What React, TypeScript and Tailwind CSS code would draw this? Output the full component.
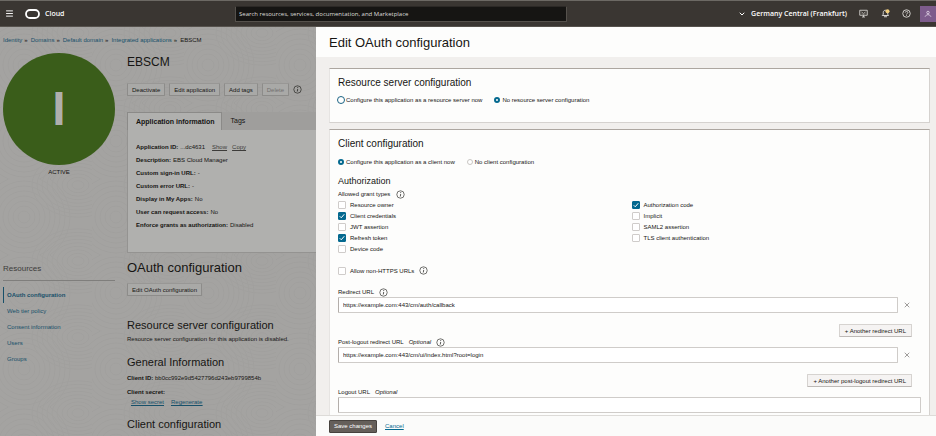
import type { ReactNode } from "react";
import { ChevronDown, Menu, X } from "lucide-react";

function InfoIcon() {
  return (
    <svg className="size-[9px] shrink-0" viewBox="0 0 18 18" fill="none" stroke="currentColor" aria-hidden="true">
      <circle cx="9" cy="9" r="7.4" strokeWidth="1.2" />
      <path d="M9.400 8 8.600 13" strokeWidth="1.4" />
      <circle cx="9.600" cy="5.300" r="0.6" fill="currentColor" strokeWidth="0.6" />
    </svg>
  );
}

function Waves() {
  const rings = [6, 11, 16, 21, 26, 31, 36, 41, 46];
  return (
    <svg className="pointer-events-none absolute inset-0 size-full" aria-hidden="true">
      <defs>
        <pattern id="waves" width="92" height="76" patternUnits="userSpaceOnUse">
          <g fill="none" stroke="#9e9d9b" strokeWidth="1">
            {rings.map((r) => (
              <g key={r}>
                <circle cx="24" cy="38" r={r} />
                <ellipse cx="78" cy="6" rx={r} ry={r * 0.7} />
                <ellipse cx="78" cy="82" rx={r} ry={r * 0.7} />
              </g>
            ))}
          </g>
        </pattern>
      </defs>
      <rect width="100%" height="100%" fill="url(#waves)" opacity="0.6" />
    </svg>
  );
}

function TopBar() {
  return (
    <header className="flex h-[27px] shrink-0 items-center border-t border-b border-t-[#6c6964] border-b-[#56524d] bg-[#3a3632] pl-[5px] font-['Open_Sans','Noto_Sans',sans-serif] text-white">
      <div className="flex w-[230px] items-center">
        <button type="button" aria-label="Open navigation menu">
          <Menu className="size-[9px]" strokeWidth={2.5} />
        </button>
        <svg className="ml-[11px] h-[10px] w-[15px]" viewBox="0 0 15 10" fill="none" aria-label="Oracle">
          <rect x="1" y="1" width="13" height="8" rx="4" stroke="#fff" strokeWidth="1.8" />
        </svg>
        <span className="ml-[5px] text-[7px] leading-[10px] font-semibold">Cloud</span>
      </div>
      <input
        type="search"
        aria-label="Search"
        placeholder="Search resources, services, documentation, and Marketplace"
        className="h-4 w-[332px] rounded-[1px] border border-t-[#2c2926] border-[#55514c] bg-[#161513] px-[3px] text-[6px] placeholder:text-[#deddda]"
      />
      <div className="flex flex-1 items-center justify-end">
        <button type="button" className="flex items-center gap-[5px] text-[7px] leading-[10px] font-semibold">
          <ChevronDown className="size-2" strokeWidth={3} />
          Germany Central (Frankfurt)
        </button>
        <button type="button" aria-label="Developer tools" className="ml-3">
          <svg className="size-[9px]" viewBox="0 0 18 18" fill="none" stroke="#e6e4e1" strokeWidth="1.6">
            <path d="M1.5 2.5h15v10h-15zM6 16h6M9 12.5V16M5 5.5l1.5 1.5L5 8.5M13 5.5 11.500 7l1.500 1.500M7 9.800h4" />
          </svg>
        </button>
        <button type="button" aria-label="Announcements" className="ml-[13px]">
          <svg className="size-[9px]" viewBox="0 0 18 18" fill="none" stroke="#e6e4e1" strokeWidth="1.8">
            <path d="M2.500 13h12.500l-1.500-2.500V7c0-3-2-4.500-4.500-4.500S4.500 4 4.500 7v3.500zM6 15.500h6" />
            <circle cx="13" cy="4.500" r="4" fill="#f3cf7c" stroke="none" />
          </svg>
        </button>
        <button type="button" aria-label="Help" className="ml-3">
          <svg className="size-[9px]" viewBox="0 0 18 18" fill="none" stroke="#e6e4e1" strokeWidth="1.7">
            <circle cx="9" cy="9" r="7.500" />
            <path d="M6.500 7.200c0-3.500 5.200-3.200 5.200-.2 0 1.900-2.700 1.900-2.700 4M9 12.500v1.500" />
          </svg>
        </button>
        <button type="button" aria-label="Profile" className="ml-[9px] flex size-4 items-center justify-center bg-[#7d5c8c]">
          <svg className="size-2" viewBox="0 0 16 16" fill="none" stroke="#e4d8ea" strokeWidth="1.600">
            <circle cx="8" cy="5" r="2.500" />
            <path d="M2 13.500 5.500 9.500h5l3.500 4" />
          </svg>
        </button>
      </div>
    </header>
  );
}

const crumbs = ["Identity", "Domains", "Default domain", "Integrated applications"];
const resources = ["OAuth configuration", "Web tier policy", "Consent information", "Users", "Groups"];

const appInfo: [string, ReactNode][] = [
  [
    "Application ID:",
    <>
      ...dc4631
      <a href="#show" className="ml-[7px] text-[#3d3c3a] underline">Show</a>
      <a href="#copy" className="ml-[5px] text-[#3d3c3a] underline">Copy</a>
    </>,
  ],
  ["Description:", "EBS Cloud Manager"],
  ["Custom sign-in URL:", "-"],
  ["Custom error URL:", "-"],
  ["Display in My Apps:", "No"],
  ["User can request access:", "No"],
  ["Enforce grants as authorization:", "Disabled"],
];

function PageButton({ children, disabled }: { children: ReactNode; disabled?: boolean }) {
  return (
    <button
      type="button"
      disabled={disabled}
      className="h-[13px] rounded-[1px] border border-[#8d8c8a] border-t-[#989795] bg-[#a9a9a7] px-1 text-[6px] leading-[10px] whitespace-nowrap disabled:text-[#71706e]"
    >
      {children}
    </button>
  );
}

function ApplicationPage() {
  return (
    <main className="relative w-[316px] shrink-0 overflow-hidden bg-[#a4a3a1]">
      <Waves />
      <div className="relative pt-2 pl-[3px]">
        <nav aria-label="Breadcrumb" className="flex gap-[3px] text-[6px] leading-[10px] whitespace-nowrap">
          {crumbs.map((crumb) => (
            <span key={crumb} className="flex gap-0.5">
              <a href="#crumb" className="text-[#17506a]">{crumb}</a>
              <span>»</span>
            </span>
          ))}
          <span>EBSCM</span>
        </nav>

        <div className="mt-2 flex gap-3">
          <div className="w-28 shrink-0">
            <div className="flex size-28 items-center justify-center rounded-full bg-[#3a5d1a] text-[48px] leading-none font-bold text-[#afafad]">
              I
            </div>
            <p className="mt-0.5 text-center text-[6px] leading-[10px]">ACTIVE</p>
          </div>
          <div className="min-w-0 flex-1">
            <h1 className="text-[12px] leading-[18px]">EBSCM</h1>
            <div className="mt-3 flex items-center gap-1">
              <PageButton>Deactivate</PageButton>
              <PageButton>Edit application</PageButton>
              <PageButton>Add tags</PageButton>
              <PageButton disabled>Delete</PageButton>
              <InfoIcon />
            </div>
            <div role="tablist" className="mt-4 flex text-[7px] leading-[10px]">
              <button
                type="button"
                role="tab"
                aria-selected="true"
                className="h-[18px] border-t border-r border-l border-[#8b8a88] bg-[#b0b0ae] pr-1.5 pl-2 font-bold whitespace-nowrap"
              >
                Application information
              </button>
              <button type="button" role="tab" aria-selected="false" className="h-[18px] flex-1 bg-[#9f9e9c] px-[9px] text-left">
                Tags
              </button>
            </div>
            <dl className="flex flex-col gap-[3px] border-b border-l border-[#949391] bg-[#b0b0ae] px-2 pt-3 pb-[22px] text-[6px] leading-[10px] whitespace-nowrap">
              {appInfo.map(([term, value]) => (
                <div key={term} className="flex gap-0.5">
                  <dt className="font-bold">{term}</dt>
                  <dd>{value}</dd>
                </div>
              ))}
            </dl>
          </div>
        </div>

        <div className="flex gap-3">
          <aside className="w-28 shrink-0 pt-[11px]">
            <h2 className="border-b border-[#7f7e7c] pb-1.5 text-[8px] leading-[10px] text-[#3d3c3a]">Resources</h2>
            <ul className="mt-1.5 text-[6px] leading-4 text-[#17506a]">
              {resources.map((item, index) => (
                <li key={item}>
                  <a
                    href="#resource"
                    className={index === 0 ? "block border-l border-[#17506a] pl-[3px] font-bold" : "block border-l border-transparent pl-[3px]"}
                  >
                    {item}
                  </a>
                </li>
              ))}
            </ul>
          </aside>
          <section className="min-w-0 flex-1 pt-1.5 text-[6px] leading-[10px] whitespace-nowrap">
            <h2 className="text-[13px] leading-[18px]">OAuth configuration</h2>
            <div className="mt-1.5 flex">
              <PageButton>Edit OAuth configuration</PageButton>
            </div>
            <h3 className="mt-[22px] text-[11px] leading-[14px]">Resource server configuration</h3>
            <p className="mt-0.5">Resource server configuration for this application is disabled.</p>
            <h3 className="mt-[11px] text-[11px] leading-[14px]">General Information</h3>
            <p className="mt-1">
              <b>Client ID:</b> bb0cc992e9d5427796d243eb9799854b
            </p>
            <p className="mt-1 font-bold">Client secret:</p>
            <div className="flex gap-[7px] pl-1 text-[#17506a] underline">
              <a href="#secret">Show secret</a>
              <a href="#regenerate">Regenerate</a>
            </div>
            <h3 className="mt-2.5 text-[11px] leading-[14px]">Client configuration</h3>
          </section>
        </div>
      </div>
    </main>
  );
}

function Radio({ name, label, checked, focused }: { name: string; label: string; checked?: boolean; focused?: boolean }) {
  return (
    <label className="flex items-center gap-0.5">
      <span className="flex w-1.5 items-center justify-center">
        <input
          type="radio"
          name={name}
          defaultChecked={checked}
          className={
            focused
              ? "size-2 shrink-0 appearance-none rounded-full border border-[#1b6485] bg-white checked:border-[3px]"
              : "size-1.5 shrink-0 appearance-none rounded-full border border-[#c9c6c3] bg-white checked:border-2 checked:border-[#04698f]"
          }
        />
      </span>
      {label}
    </label>
  );
}

function Checkbox({ label, checked }: { label: string; checked?: boolean }) {
  return (
    <label className="flex h-[11px] items-center gap-1">
      <span className="relative flex size-2">
        <input
          type="checkbox"
          defaultChecked={checked}
          className="peer size-2 appearance-none rounded-[1px] border border-[#cfccca] bg-white checked:border-[#04698f] checked:bg-[#04698f]"
        />
        <svg
          className="pointer-events-none absolute inset-0 hidden size-2 peer-checked:block"
          viewBox="0 0 16 16"
          fill="none"
          stroke="#fff"
          strokeWidth="2"
          aria-hidden="true"
        >
          <path d="m3.500 8.500 3 3 6-7" />
        </svg>
      </span>
      {label}
    </label>
  );
}

function UrlField({ id, label, value, optional, info, addLabel }: { id: string; label: string; value: string; optional?: boolean; info?: boolean; addLabel?: string }) {
  return (
    <div className={addLabel ? "pr-[9px]" : ""}>
      <div className="flex h-[10px] items-center gap-[5px]">
        <label htmlFor={id} className="flex gap-[5px]">
          {label}
          {optional && <i>Optional</i>}
        </label>
        {info && <InfoIcon />}
      </div>
      <div className="flex items-center">
        <input
          id={id}
          type="text"
          defaultValue={value}
          className="h-4 min-w-0 flex-1 rounded-[1px] border border-[#cfccc9] border-l-[#b3aeaa] bg-white px-1 text-[6px]"
        />
        {addLabel && (
          <button type="button" aria-label="Remove" className="mr-px ml-[5px]">
            <X className="size-2 text-[#6f6c69]" strokeWidth={2} />
          </button>
        )}
      </div>
      {addLabel && (
        <div className="mt-[11px] flex justify-end">
          <button type="button" className="h-[13px] rounded-[1px] border border-[#d6d3d0] border-b-[#bdb9b6] bg-[#f5f3f2] px-[5px]">
            + {addLabel}
          </button>
        </div>
      )}
    </div>
  );
}

const grantsLeft: [string, boolean][] = [
  ["Resource owner", false],
  ["Client credentials", true],
  ["JWT assertion", false],
  ["Refresh token", true],
  ["Device code", false],
];
const grantsRight: [string, boolean][] = [
  ["Authorization code", true],
  ["Implicit", false],
  ["SAML2 assertion", false],
  ["TLS client authentication", false],
];

function Panel({ title, children }: { title: string; children: ReactNode }) {
  return (
    <section className="border border-[#d5d2cf] border-t-[#aca6a0] border-l-[#e6e4e2] bg-[#fdfdfc] px-2 pt-[7px]">
      <h3 className="text-[10px] leading-[14px]">{title}</h3>
      {children}
    </section>
  );
}

function EditDrawer() {
  return (
    <section aria-label="Edit OAuth configuration" className="flex min-w-0 flex-1 flex-col bg-[#f1efed] text-[6px] leading-[10px]">
      <h2 className="flex h-[30px] shrink-0 items-center bg-[#fdfdfc] pt-0.5 pl-[13px] text-[13px] leading-[18px]">Edit OAuth configuration</h2>
      <div className="flex min-h-0 flex-1 flex-col gap-1.5 overflow-hidden pt-[11px] pr-1.5 pl-[13px]">
        <Panel title="Resource server configuration">
          <div className="mt-[5px] mb-[17px] flex gap-3">
            <Radio name="server" label="Configure this application as a resource server now" focused />
            <Radio name="server" label="No resource server configuration" checked />
          </div>
        </Panel>
        <Panel title="Client configuration">
          <div className="mt-1.5 flex gap-3">
            <Radio name="client" label="Configure this application as a client now" checked />
            <Radio name="client" label="No client configuration" />
          </div>
          <h4 className="mt-2 text-[9px] leading-[12px]">Authorization</h4>
          <fieldset>
            <legend className="flex items-center gap-1.5 pt-0.5">
              Allowed grant types <InfoIcon />
            </legend>
            <div className="grid grid-cols-2 gap-1">
              <div>
                {grantsLeft.map(([label, on]) => (
                  <Checkbox key={label} label={label} checked={on} />
                ))}
              </div>
              <div>
                {grantsRight.map(([label, on]) => (
                  <Checkbox key={label} label={label} checked={on} />
                ))}
              </div>
            </div>
          </fieldset>
          <div className="my-[11px] flex items-center gap-[5px]">
            <Checkbox label="Allow non-HTTPS URLs" />
            <InfoIcon />
          </div>
          <UrlField id="redirect" label="Redirect URL" value="https://example.com:443/cm/auth/callback" info addLabel="Another redirect URL" />
          <UrlField
            id="post-logout"
            label="Post-logout redirect URL"
            value="https://example.com:443/cm/ui/index.html?root=login"
            optional
            info
            addLabel="Another post-logout redirect URL"
          />
          <UrlField id="logout" label="Logout URL" value="" optional />
          <div className="h-4" />
        </Panel>
      </div>
      <footer className="flex h-[21px] shrink-0 items-center gap-2 border-t border-[#dddbd8] bg-[#fbfbfa] pl-[13px]">
        <button type="button" className="h-[13px] rounded-[1px] border border-[#47423e] bg-[#655f5a] px-1 text-white">
          Save changes
        </button>
        <a href="#cancel" className="text-[#04698f] underline">Cancel</a>
      </footer>
    </section>
  );
}

export default function App() {
  return (
    <div className="flex h-screen flex-col overflow-hidden font-['Liberation_Sans',Arial,sans-serif] text-[#161513]">
      <TopBar />
      <div className="flex min-h-0 flex-1">
        <ApplicationPage />
        <EditDrawer />
      </div>
    </div>
  );
}
